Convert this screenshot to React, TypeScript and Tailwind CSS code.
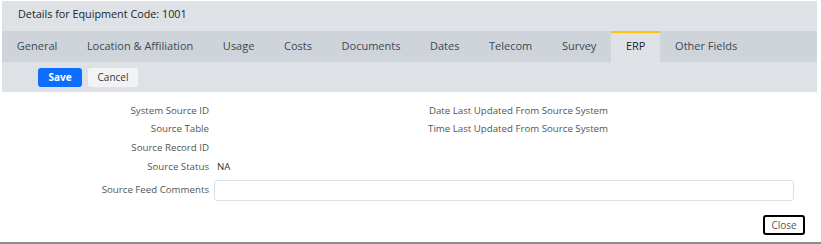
import React from 'react';

const tabs = [
  'General',
  'Location & Affiliation',
  'Usage',
  'Costs',
  'Documents',
  'Dates',
  'Telecom',
  'Survey',
  'ERP',
  'Other Fields',
];

const rows: { label: string; value?: string; right?: string }[] = [
  { label: 'System Source ID', right: 'Date Last Updated From Source System' },
  { label: 'Source Table', right: 'Time Last Updated From Source System' },
  { label: 'Source Record ID' },
  { label: 'Source Status', value: 'NA' },
];

export default function App() {
  return (
    <div className="relative w-[821px] h-[244px] bg-white font-['Open_Sans',sans-serif] text-[9.7px] text-[#555]">
      {/* Header */}
      <div className="ml-[2px] pt-[1px] w-[815px]">
        <div className="h-[30px] bg-[#dee2e6] flex items-center pl-4 pb-[3px] text-[10.8px] text-[#212529]">
          Details for Equipment Code: 1001
        </div>

        {/* Tabs */}
        <div className="h-[31px] bg-[#ced4da] flex">
          {tabs.map((tab) => (
            <div
              key={tab}
              className={
                tab === 'ERP'
                  ? 'px-[14.8px] flex items-center bg-[#dee2e6] border-t-2 border-[#ffc107] pb-[2px] text-[11px] text-[#212529] whitespace-nowrap'
                  : 'px-[14.8px] flex items-center text-[11px] text-[#3d4852] whitespace-nowrap'
              }
            >
              {tab}
            </div>
          ))}
        </div>

        {/* Toolbar */}
        <div className="h-[30px] bg-[#dee2e6] flex items-center pl-[36px] gap-[6px]">
          <button className="h-[19px] w-[44px] rounded-[3px] bg-[#0d6efd] text-white font-bold text-[10px] leading-none">
            Save
          </button>
          <button className="h-[19px] w-[50px] rounded-[3px] bg-[#f1f3f5] text-[#343a40] text-[10px] leading-none">
            Cancel
          </button>
        </div>
      </div>

      {/* Form */}
      <div className="mt-[10px] ml-[2px] flex flex-col">
        {rows.map((row, i) => (
          <div key={row.label} className={i === 0 ? 'flex h-[18px] items-center' : 'flex h-[19px] items-center'}>
            <div className="w-[207px] text-right whitespace-nowrap">{row.label}</div>
            <div className="w-[200px] pl-[8px] text-[#333]">{row.value}</div>
            <div className="w-[199px] text-right whitespace-nowrap">{row.right}</div>
          </div>
        ))}
        <div className="flex items-center mt-[3px] h-[21px]">
          <div className="w-[207px] text-right whitespace-nowrap">Source Feed Comments</div>
          <input className="ml-[5px] w-[580px] h-[21px] border border-[#dcdfe3] rounded-[3px] outline-none" />
        </div>
      </div>

      <div className="flex justify-end pr-[16px] mt-[14px]">
        <button className="h-[20px] w-[42px] rounded-[3px] border-2 border-black bg-white text-[10px] text-[#555] leading-none">
          Close
        </button>
      </div>

      <div className="absolute left-0 right-0 bottom-0 h-[2px] bg-[#8c8c8c]" />
    </div>
  );
}
